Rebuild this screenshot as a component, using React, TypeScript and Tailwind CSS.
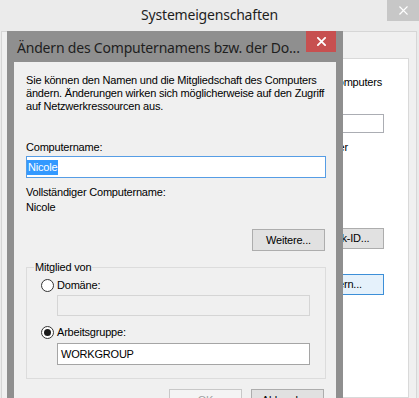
import React from "react";

const sans = "font-['Liberation_Sans',Arial,sans-serif]";
const title = "font-['Noto_Sans','Open_Sans',sans-serif] text-[14px] tracking-[-0.2px]";

function Cross({ size, weight }: { size: number; weight: number }) {
  return (
    <svg width={size} height={size} viewBox="0 0 10 10">
      <path d="M1 1L9 9M9 1L1 9" stroke="white" strokeWidth={weight} strokeLinecap="square" />
    </svg>
  );
}

function Radio({ checked, label }: { checked?: boolean; label: string }) {
  return (
    <div className="flex h-[13px] items-center pl-[14px]">
      <div className="flex h-[13px] w-[13px] items-center justify-center rounded-full border border-[#333] bg-white">
        {checked && <div className="h-[7px] w-[7px] rounded-full bg-[#1a1a1a]" />}
      </div>
      <span className="ml-[3px]">{label}</span>
    </div>
  );
}

function Button({ children, disabled, className = "" }: { children: React.ReactNode; disabled?: boolean; className?: string }) {
  return (
    <div
      className={`flex h-[22px] w-[73px] items-start justify-center pt-[4px] border ${
        disabled ? "border-[#c8c8c8] bg-[#f4f4f4] text-[#a0a0a0]" : "border-[#adadad] bg-[#e1e1e1] text-black"
      } ${className}`}
    >
      {children}
    </div>
  );
}

function BackgroundWindow() {
  return (
    <div className="flex h-full flex-col">
      <div className="relative flex h-[31px] justify-center bg-[#ebebeb]">
        <span className={`${title} mt-[5px] leading-[20px] text-[#1e1e1e]`}>Systemeigenschaften</span>
        <div className="absolute right-0 top-0 flex h-[21px] w-[32px] items-center justify-center bg-[#c7c7c7]">
          <Cross size={9} weight={1.4} />
        </div>
      </div>
      <div className="ml-[1px] mr-[2px] flex-1 border-x border-t border-[#d6d6d6] bg-[#f0f0f0]">
        <div className={`${sans} ml-[7px] mr-[7px] mt-[26px] h-[340px] whitespace-nowrap border border-[#d9d9d9] bg-white pr-[24px] pt-[17px] text-[11px] leading-[13px] tracking-[-0.2px] text-black`}>
          <p className="pr-[2px] text-right">Folgende Informationen werden zur Identifizierung des Computers</p>
          <div className="mt-[25px] h-[19px] border border-[#abadb3] bg-white" />
          <p className="mt-[8px] pr-[36px] text-right">Beispiel: „Wohnzimmercomputer“ oder</p>
          <div className="mt-[74px] flex justify-end">
            <div className="flex h-[21px] w-[87px] items-center justify-center border border-[#adadad] bg-[#e1e1e1] pr-[9px]">Netzwerk-ID...</div>
          </div>
          <div className="mt-[25px] flex justify-end">
            <div className="flex h-[21px] w-[87px] items-center justify-center border border-[#3c8fd8] bg-[#e5f1fb]">Ändern...</div>
          </div>
        </div>
      </div>
    </div>
  );
}

function RenameDialog() {
  return (
    <div className="absolute left-[7px] top-[31px] w-[336px] bg-[#8f8f8f] px-[7px]">
      <div className="flex h-[31px] items-start">
        <span className={`${title} ml-[3px] mt-[7px] flex-1 whitespace-nowrap leading-[20px] text-[#1e1e1e]`}>
          Ändern des Computernamens bzw. der Do...
        </span>
        <div className="flex h-[21px] w-[30px] items-center justify-center bg-[#c75050]">
          <Cross size={9} weight={2} />
        </div>
      </div>
      <div className={`${sans} h-[380px] whitespace-nowrap bg-[#f0f0f0] pl-[12px] pr-[10px] pt-[12px] text-[11px] leading-[13px] tracking-[-0.2px] text-black`}>
        <p>
          Sie können den Namen und die Mitgliedschaft des Computers
          <br />
          ändern. Änderungen wirken sich möglicherweise auf den Zugriff
          <br />
          auf Netzwerkressourcen aus.
        </p>
        <p className="mt-[28px]">Computername:</p>
        <div className="mt-[2px] flex h-[22px] items-center border border-[#569de5] bg-white">
          <span className="bg-[#3399ff] px-[1px] leading-[15px] text-white">Nicole</span>
        </div>
        <p className="mt-[8px]">Vollständiger Computername:</p>
        <p className="mt-[2px]">Nicole</p>
        <div className="mt-[15px] flex justify-end">
          <Button className="mr-[1px] h-[21px]">Weitere...</Button>
        </div>
        <div className="mt-[16px] h-[112px] border border-[#dcdcdc]">
          <div className="-mt-[7px] ml-[7px] w-fit bg-[#f0f0f0] px-[1px]">Mitglied von</div>
          <div className="mt-[5px]">
            <Radio label="Domäne:" />
          </div>
          <div className="ml-[30px] mt-[3px] h-[21px] w-[253px] border border-[#d5d5d5] bg-[#f0f0f0]" />
          <div className="mt-[10px]">
            <Radio checked label="Arbeitsgruppe:" />
          </div>
          <div className="ml-[30px] mt-[4px] flex h-[22px] w-[253px] items-center border border-[#a5a5a5] bg-white pl-[3px]">
            WORKGROUP
          </div>
        </div>
        <div className="mr-[2px] mt-[10px] flex justify-end gap-[9px]">
          <Button disabled className="w-[72px]">OK</Button>
          <Button className="w-[72px]">Abbrechen</Button>
        </div>
      </div>
    </div>
  );
}

export default function App() {
  return (
    <div className="relative h-[398px] w-[419px] overflow-hidden bg-[#ebebeb]">
      <BackgroundWindow />
      <RenameDialog />
    </div>
  );
}
